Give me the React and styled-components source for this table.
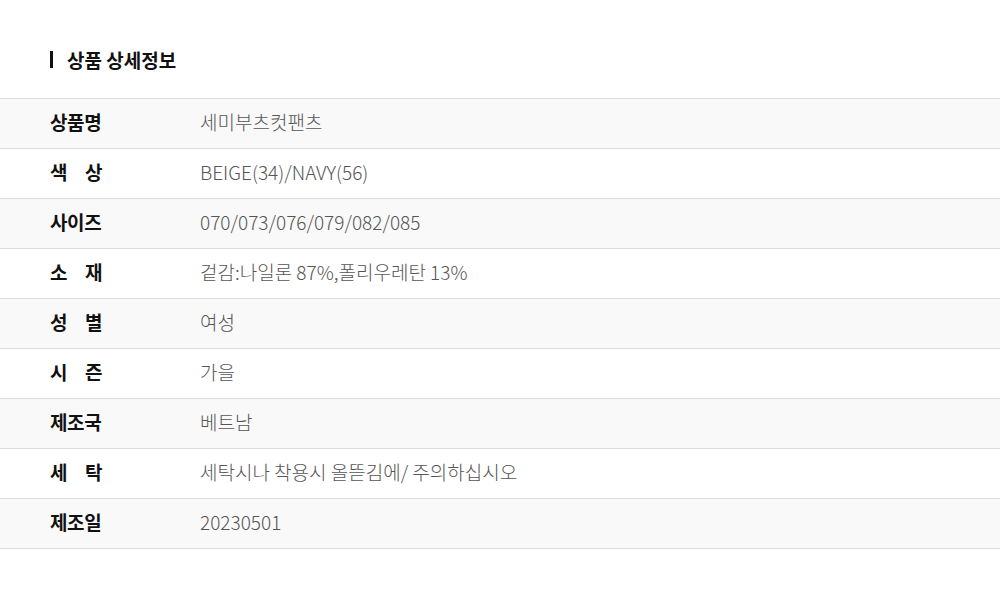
import React from 'react';
import styled, { createGlobalStyle } from 'styled-components';

const GlobalStyle = createGlobalStyle`
  body {
    margin: 0;
    background: #fff;
    font-family: 'Noto Sans CJK KR', 'Noto Sans', sans-serif;
  }
`;

const Wrap = styled.section`
  width: 1000px;
  padding-top: 48px;
`;

const Heading = styled.h2`
  display: flex;
  align-items: center;
  gap: 14px;
  margin: 0 0 25px 50px;
  height: 25px;
  font-size: 19px;
  line-height: 1;
  font-weight: 700;
  color: #111;
  padding-bottom: 3px;
  box-sizing: border-box;

  &::before {
    content: '';
    width: 3px;
    height: 17px;
    background: #111;
  }
`;

const Table = styled.div`
  border-top: 1px solid #dcdcdc;
`;

const Row = styled.div`
  display: flex;
  align-items: center;
  height: 50px;
  padding-bottom: 5px;
  box-sizing: border-box;
  border-bottom: 1px solid #dcdcdc;
  background: ${({ shaded }) => (shaded ? '#f9f9f9' : '#fff')};
`;

const Label = styled.div`
  width: 52px;
  margin-left: 50px;
  margin-right: 98px;
  font-size: 19px;
  line-height: 1;
  font-weight: 700;
  color: #111;
  white-space: nowrap;
  text-align: justify;
  text-align-last: justify;
  letter-spacing: -0.4px;
`;

const Value = styled.div`
  font-size: 19px;
  line-height: 1;
  font-weight: 300;
  color: #555;
`;

const rows = [
  ['상품명', '세미부츠컷팬츠'],
  ['색 상', 'BEIGE(34)/NAVY(56)'],
  ['사이즈', '070/073/076/079/082/085'],
  ['소 재', '겉감:나일론 87%,폴리우레탄 13%'],
  ['성 별', '여성'],
  ['시 즌', '가을'],
  ['제조국', '베트남'],
  ['세 탁', '세탁시나 착용시 올뜯김에/ 주의하십시오'],
  ['제조일', '20230501'],
];

const App = () => (
  <>
    <GlobalStyle />
    <Wrap>
      <Heading>상품 상세정보</Heading>
      <Table>
        {rows.map(([label, value], i) => (
          <Row key={label} shaded={i % 2 === 0}>
            <Label>{label}</Label>
            <Value>{value}</Value>
          </Row>
        ))}
      </Table>
    </Wrap>
  </>
);

export default App;
